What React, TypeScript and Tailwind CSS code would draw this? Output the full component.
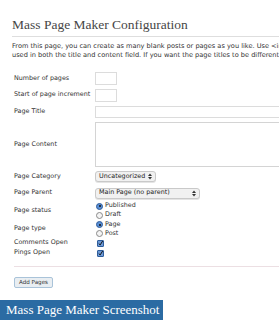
import React from "react";

const sans = "font-['Lucida_Grande','DejaVu_Sans',sans-serif]";

function SelectArrows() {
  return (
    <svg width="4" height="7" viewBox="0 0 4 7" className="shrink-0">
      <path d="M0 3 L2 0.5 L4 3 Z" fill="#333" />
      <path d="M0 4 L2 6.5 L4 4 Z" fill="#333" />
    </svg>
  );
}

function Radio({ checked, label }: { checked?: boolean; label: string }) {
  return (
    <div className="flex h-[9px] items-center gap-[2px]">
      {checked ? (
        <span className="flex h-[7px] w-[7px] items-center justify-center rounded-full border border-[#2f5d9a] bg-[#5a8fd6]">
          <span className="h-[2px] w-[2px] rounded-full bg-[#111]" />
        </span>
      ) : (
        <span className="h-[7px] w-[7px] rounded-full border border-[#8a8a8a] bg-[#f4f4f4]" />
      )}
      <span>{label}</span>
    </div>
  );
}

function Check() {
  return (
    <span className="flex h-[7px] w-[7px] items-center justify-center rounded-[1px] border border-[#2f5d9a] bg-[#6c9ad8]">
      <svg width="7" height="7" viewBox="0 0 7 7">
        <path d="M1 3.5 L3 5.5 L6.5 0" stroke="#111" strokeWidth="1.4" fill="none" />
      </svg>
    </span>
  );
}

function Row({ label, h, children }: { label: string; h: string; children?: React.ReactNode }) {
  return (
    <div className={`flex items-center ${h}`}>
      <div className="w-[81px] shrink-0 whitespace-nowrap">{label}</div>
      <div className="flex items-center">{children}</div>
    </div>
  );
}

export default function App() {
  return (
    <div className="h-[329px] w-[279px] overflow-hidden bg-white">
      <div className="w-[420px]">
        <div className="ml-[12px] border-b border-[#dedede] pt-[16px] pb-[2px]">
          <h1 className="h-[18px] font-['Liberation_Serif',serif] text-[13.5px] leading-[18px] text-[#464646]">
            Mass Page Maker Configuration
          </h1>
        </div>

        <div className={`${sans} ml-[12px] mt-[5px] text-[6.6px] leading-[9px] text-[#333]`}>
          <p className="whitespace-nowrap">
            From this page, you can create as many blank posts or pages as you like. Use &lt;inc&gt; as the increment number, it can be
          </p>
          <p className="whitespace-nowrap">
            used in both the title and content field. If you want the page titles to be different from each other, use the increment.
          </p>
        </div>

        <div className={`${sans} ml-[14px] mt-[10px] text-[6.4px] text-[#333]`}>
          <Row label="Number of pages" h="h-[17px]">
            <span className="h-[13px] w-[22px] border border-[#dcdcdc] bg-white" />
          </Row>
          <Row label="Start of page increment" h="h-[16px]">
            <span className="h-[13px] w-[22px] border border-[#dcdcdc] bg-white" />
          </Row>
          <Row label="Page Title" h="h-[18px]">
            <span className="h-[12px] w-[200px] border border-[#dcdcdc] bg-white" />
          </Row>
          <Row label="Page Content" h="h-[47px]">
            <span className="relative h-[45px] w-[200px] border border-[#d4d4d4] bg-white">
              <svg width="4" height="4" viewBox="0 0 4 4" className="absolute right-[1px] bottom-[1px]">
                <path d="M0 4 L4 0 M2 4 L4 2" stroke="#aaa" strokeWidth="0.6" />
              </svg>
            </span>
          </Row>
          <Row label="Page Category" h="h-[17px]">
            <span className="flex h-[11px] w-[61px] items-center justify-between rounded-[3px] border border-[#c9c9c9] bg-[#f1f1f1] px-[3px] text-[#222] shadow-[0_1px_0_#e4e4e4]">
              <span>Uncategorized</span>
              <SelectArrows />
            </span>
          </Row>
          <Row label="Page Parent" h="h-[16px]">
            <span className="flex h-[11px] w-[105px] items-center justify-between rounded-[3px] border border-[#c9c9c9] bg-[#f1f1f1] px-[3px] text-[#222] shadow-[0_1px_0_#e4e4e4]">
              <span>Main Page (no parent)</span>
              <SelectArrows />
            </span>
          </Row>
          <Row label="Page status" h="h-[19px]">
            <div className="flex flex-col pl-[1px]">
              <Radio checked label="Published" />
              <Radio label="Draft" />
            </div>
          </Row>
          <Row label="Page type" h="h-[18px]">
            <div className="flex flex-col pl-[1px]">
              <Radio checked label="Page" />
              <Radio label="Post" />
            </div>
          </Row>
          <Row label="Comments Open" h="h-[10px]">
            <span className="pl-[2px]">
              <Check />
            </span>
          </Row>
          <Row label="Pings Open" h="h-[10px]">
            <span className="pl-[2px]">
              <Check />
            </span>
          </Row>

          <div className="mt-[8px] border-t border-[#ecdfe3]" />

          <button className="mt-[10px] flex h-[11px] w-[39px] items-center justify-center rounded-[2px] border border-[#a9c3d9] bg-[#e9eef2] text-[5.6px] text-[#333]">
            Add Pages
          </button>
        </div>

        <div className="mt-[12px] flex h-[20px] w-[163px] items-center bg-[#2b6ba3] pl-[6px] font-['Liberation_Serif',serif] text-[13px] text-white">
          Mass Page Maker Screenshot
        </div>
      </div>
    </div>
  );
}
